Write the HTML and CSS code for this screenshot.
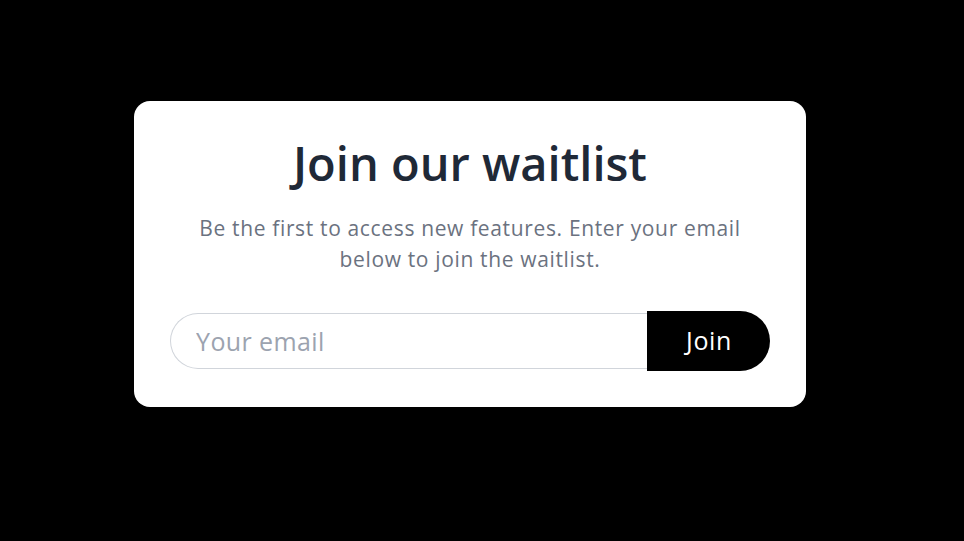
FILE: index.html
```html
<!DOCTYPE html>
<html lang="en">
<head>
<meta charset="utf-8">
<title>Join our waitlist</title>
<link rel="stylesheet" href="styles.css">
</head>
<body>
<main class="card">
  <h1 class="title">Join our waitlist</h1>
  <p class="subtitle">Be the first to access new features. Enter your email below to join the waitlist.</p>
  <form class="form" onsubmit="return false">
    <input class="email" type="email" placeholder="Your email">
    <button class="join" type="submit">Join</button>
  </form>
</main>
</body>
</html>
```

FILE: styles.css
```css
html, body {
  margin: 0;
  padding: 0;
  background: #000;
}
body {
  font-family: "Open Sans", "Liberation Sans", sans-serif;
  padding-top: 101px;
  padding-left: 134px;
}
.card {
  box-sizing: border-box;
  width: 672px;
  height: 306px;
  background: #fff;
  border-radius: 16px;
  padding: 36px 36px;
  display: flex;
  flex-direction: column;
  align-items: center;
}
.title {
  margin: 0;
  font-size: 47px;
  line-height: 52px;
  font-weight: 600;
  color: #1f2937;
}
.subtitle {
  margin: 24px 0 0;
  width: 560px;
  text-align: center;
  font-size: 21px;
  line-height: 31px;
  letter-spacing: 0.65px;
  color: #6b7280;
}
.form {
  margin-top: 36px;
  display: flex;
  align-items: center;
  width: 600px;
}
.email {
  flex: 1;
  box-sizing: border-box;
  height: 56px;
  border: 1px solid #d1d5db;
  border-right: none;
  border-radius: 28px 0 0 28px;
  padding: 0 0 0 25px;
  font-family: inherit;
  font-size: 25px;
  letter-spacing: 0.4px;
  color: #1f2937;
  outline: none;
}
.email::placeholder {
  color: #9ca3af;
}
.join {
  width: 123px;
  height: 60px;
  background: #000;
  color: #fff;
  border: none;
  border-radius: 0 30px 30px 0;
  font-family: inherit;
  font-size: 25px;
  font-weight: 500;
  letter-spacing: 0.6px;
  padding: 0 0 2px 1px;
  cursor: pointer;
}
```
